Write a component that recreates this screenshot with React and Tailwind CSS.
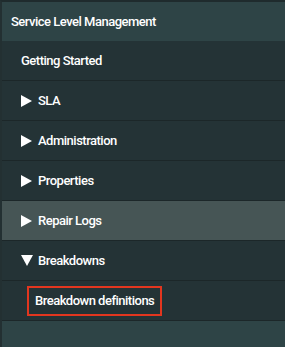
import React from 'react'

const items = [
  { label: 'SLA', arrow: 'right' },
  { label: 'Administration', arrow: 'right' },
  { label: 'Properties', arrow: 'right' },
  { label: 'Repair Logs', arrow: 'right', active: true },
  { label: 'Breakdowns', arrow: 'down' },
]

function Arrow({ dir }) {
  if (dir === 'down') {
    return (
      <svg width="12" height="11" viewBox="0 0 12 11" className="mr-[5px] shrink-0">
        <polygon points="0,0 12,0 6,11" fill="#ffffff" />
      </svg>
    )
  }
  return (
    <svg width="11" height="12" viewBox="0 0 11 12" className="mr-[6px] shrink-0">
      <polygon points="0,0 11,6 0,12" fill="#ffffff" />
    </svg>
  )
}

export default function App() {
  return (
    <div
      className="w-[285px] h-[347px] overflow-hidden bg-[#2e4446] border-l-2 border-[#233032] border-t-2 border-t-[#1f2b2d] text-white flex flex-col tracking-[-0.5px]"
      style={{ fontFamily: 'Roboto, "Open Sans", sans-serif' }}
    >
      <div className="h-[39px] shrink-0 flex items-center pl-[9px] text-[13px] font-medium">
        Service Level Management
      </div>
      <div className="flex flex-col">
        <div className="h-10 flex items-center pl-[19px] bg-[#243336] border-b border-[#1c2729] text-[13px] font-medium">
          Getting Started
        </div>
        {items.map((item) => (
          <div
            key={item.label}
            className={
              item.active
                ? 'h-10 flex items-center pl-[19px] bg-[#465555] border-b border-[#1c2729] text-[13px] font-medium'
                : 'h-10 flex items-center pl-[19px] bg-[#243336] border-b border-[#1c2729] text-[13px] font-medium'
            }
          >
            <Arrow dir={item.arrow} />
            {item.label}
          </div>
        ))}
        <div className="h-10 flex items-center pl-[25px] bg-[#243336] border-b border-[#1c2729]">
          <span className="h-[30px] flex items-center px-[6px] border-2 border-[#e2361f] text-[13px] font-medium">
            Breakdown definitions
          </span>
        </div>
      </div>
    </div>
  )
}
